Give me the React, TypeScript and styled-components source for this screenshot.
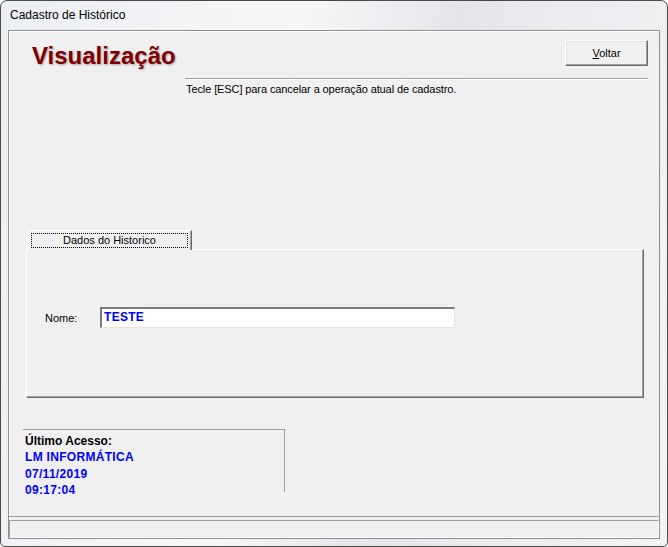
import React from 'react';
import styled, { createGlobalStyle } from 'styled-components';

const GlobalStyle = createGlobalStyle`
	html, body {
		margin: 0;
		padding: 0;
		background: #ffffff;
	}
	* {
		box-sizing: border-box;
	}
`;

const Window = styled.div`
	width: 668px;
	height: 547px;
	display: flex;
	flex-direction: column;
	border: 1px solid #4a4a4a;
	border-radius: 7px 7px 5px 5px;
	background: linear-gradient(100deg, #eceff2 0%, #f6f7f9 40%, #e4e6e9 60%, #f3f4f6 100%);
	font-family: 'Liberation Sans', Arial, sans-serif;
	overflow: hidden;
`;

const TitleBar = styled.div`
	height: 29px;
	display: flex;
	align-items: center;
	padding: 0 0 2px 9px;
	font-size: 12px;
	color: #000;
`;

const Client = styled.div`
	flex: 1;
	margin: 0 7px 7px 7px;
	display: flex;
	flex-direction: column;
	background: #f0f0f0;
	border: 1px solid #8f8f8f;
	box-shadow: inset 1px 1px 0 #ffffff;
`;

const Header = styled.div`
	display: flex;
	justify-content: space-between;
	align-items: flex-start;
	padding: 8px 11px 0 23px;
`;

const PageTitle = styled.h1`
	margin: 3px 0 0 0;
	font-size: 24px;
	line-height: 28px;
	font-weight: bold;
	color: #800000;
	text-shadow: 1px 1px 2px rgba(20, 20, 60, 0.35);
`;

const Button = styled.button`
	width: 83px;
	height: 26px;
	margin-top: 1px;
	padding: 0;
	background: #f0f0f0;
	border: 1px solid;
	border-color: #ffffff #696969 #696969 #ffffff;
	box-shadow: inset -1px -1px 0 #a0a0a0, inset 1px 1px 0 #e3e3e3;
	font-family: 'Liberation Sans', Arial, sans-serif;
	font-size: 11px;
	color: #000;

	u {
		text-decoration: underline;
	}
`;

const Separator = styled.div`
	margin: 8px 11px 0 176px;
	height: 2px;
	border-top: 1px solid #a0a0a0;
	border-bottom: 1px solid #ffffff;
`;

const Hint = styled.div`
	margin: 3px 0 0 177px;
	font-size: 11px;
	line-height: 13px;
	letter-spacing: -0.1px;
	color: #000;
`;

const Tabs = styled.div`
	margin: 134px 15px 0 17px;
`;

const TabHeader = styled.div`
	margin-left: 2px;
	width: 164px;
	height: 20px;
	padding: 2px 3px 0 2px;
	border-top: 1px solid #ffffff;
	border-left: 1px solid #ffffff;
	border-right: 1px solid #696969;
	box-shadow: inset -1px 0 0 #a0a0a0;
	position: relative;
	z-index: 1;
	margin-bottom: -1px;
	background: #f0f0f0;
`;

const FocusRect = styled.div`
	height: 15px;
	border: 1px dotted #000;
	font-size: 11px;
	line-height: 13px;
	text-align: center;
	color: #000;
`;

const TabPanel = styled.div`
	height: 149px;
	border-top: 1px solid #ffffff;
	border-left: 1px solid #ffffff;
	border-right: 1px solid #696969;
	border-bottom: 1px solid #696969;
	box-shadow: inset -1px -1px 0 #a0a0a0;
	padding: 57px 0 0 18px;
`;

const Field = styled.div`
	display: flex;
	align-items: center;
`;

const Label = styled.span`
	width: 55px;
	font-size: 11px;
	color: #000;
`;

const TextBox = styled.div`
	width: 355px;
	height: 21px;
	background: #ffffff;
	border-top: 2px solid #7a7a7a;
	border-left: 2px solid #7a7a7a;
	border-right: 1px solid #e3e3e3;
	border-bottom: 1px solid #e3e3e3;
	padding: 1px 0 0 2px;
	font-size: 12px;
	font-weight: bold;
	letter-spacing: 0.3px;
	color: #0000ff;
`;

const AccessBox = styled.div`
	margin: 31px 0 0 14px;
	width: 262px;
	height: 63px;
	border-top: 1px solid #a0a0a0;
	border-right: 1px solid #a0a0a0;
	padding: 3px 0 0 2px;
	font-size: 12px;
	font-weight: bold;
	line-height: 16.4px;
`;

const AccessLine = styled.div<{ $blue?: boolean }>`
	color: ${(p) => (p.$blue ? '#0000ff' : '#000000')};
	letter-spacing: ${(p) => (p.$blue ? '0.3px' : '0')};
`;

const StatusBar = styled.div`
	margin-top: auto;
	border-top: 1px solid #a0a0a0;
	padding: 3px 0 0 0;
`;

const StatusPanel = styled.div`
	height: 18px;
	border-top: 1px solid #a0a0a0;
	border-left: 1px solid #a0a0a0;
	border-bottom: 1px solid #ffffff;
	border-right: 1px solid #ffffff;
`;

const App = (): JSX.Element => {
	return (
		<>
			<GlobalStyle />
			<Window>
				<TitleBar>Cadastro de Histórico</TitleBar>
				<Client>
					<Header>
						<PageTitle>Visualização</PageTitle>
						<Button>
							<u>V</u>oltar
						</Button>
					</Header>
					<Separator />
					<Hint>Tecle [ESC] para cancelar a operação atual de cadastro.</Hint>
					<Tabs>
						<TabHeader>
							<FocusRect>Dados do Historico</FocusRect>
						</TabHeader>
						<TabPanel>
							<Field>
								<Label>Nome:</Label>
								<TextBox>TESTE</TextBox>
							</Field>
						</TabPanel>
					</Tabs>
					<AccessBox>
						<AccessLine>Último Acesso:</AccessLine>
						<AccessLine $blue>LM INFORMÁTICA</AccessLine>
						<AccessLine $blue>07/11/2019</AccessLine>
						<AccessLine $blue>09:17:04</AccessLine>
					</AccessBox>
					<StatusBar>
						<StatusPanel />
					</StatusBar>
				</Client>
			</Window>
		</>
	);
};

export default App;
